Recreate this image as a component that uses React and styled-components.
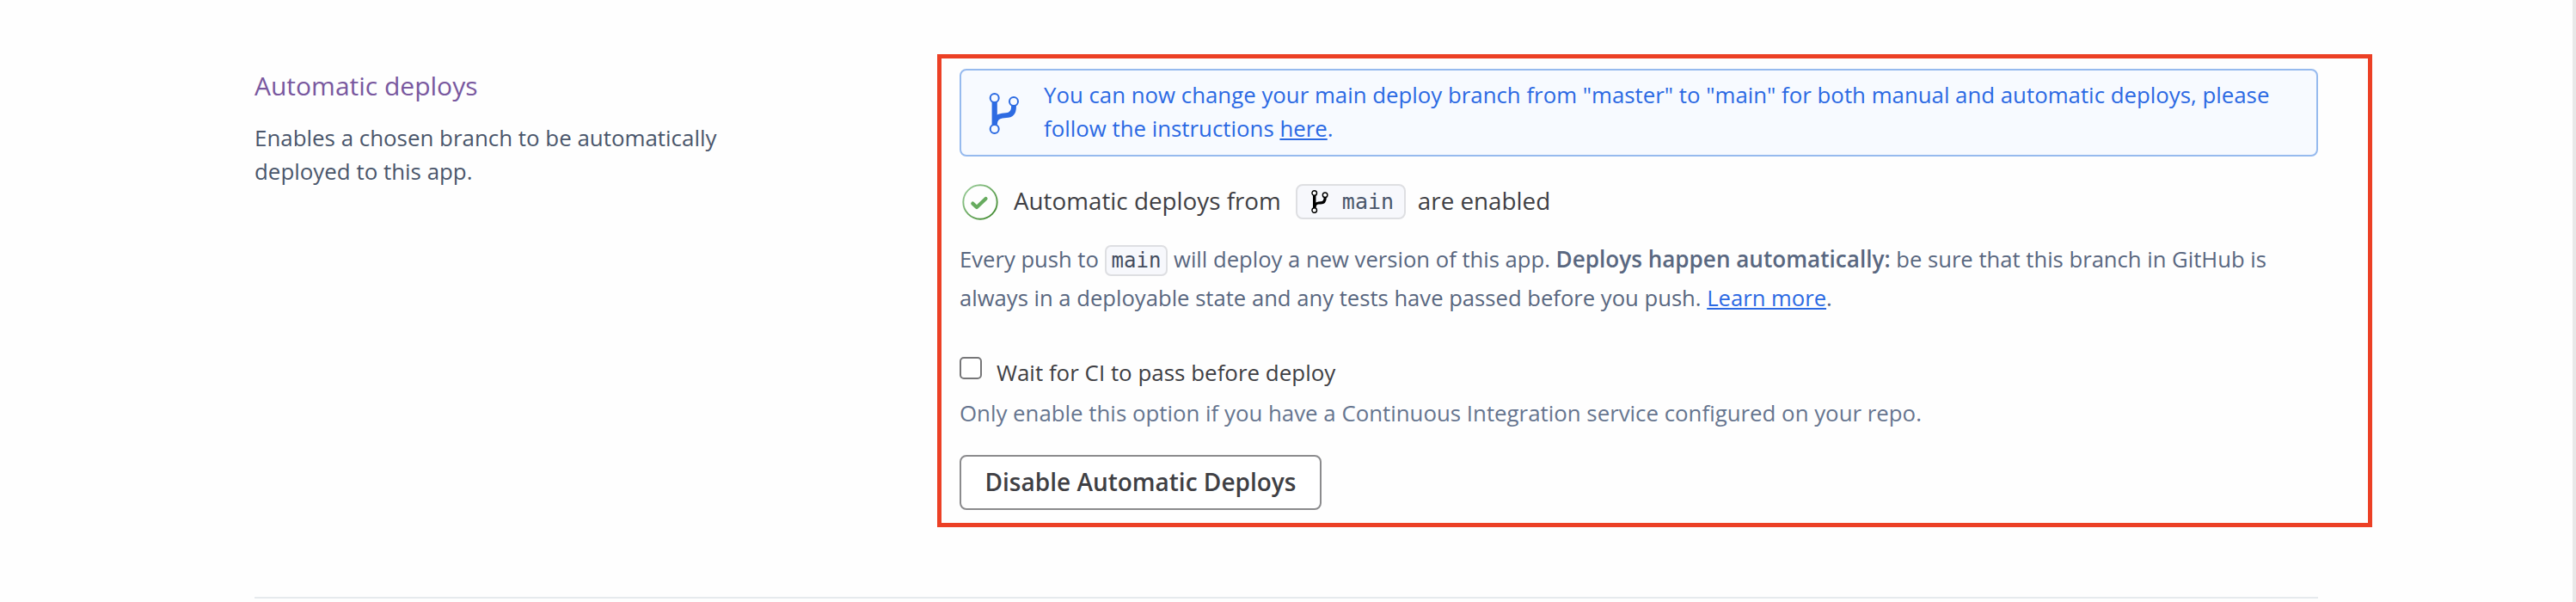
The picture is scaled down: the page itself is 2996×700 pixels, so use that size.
import React from "react";
import styled, { createGlobalStyle } from "styled-components";

const GlobalStyle = createGlobalStyle`
  *, *::before, *::after { box-sizing: border-box; }
  body {
    margin: 0;
    background: #fefefe;
    font-family: "Open Sans", "Noto Sans", sans-serif;
  }
  h2, p { margin: 0; font-weight: 400; }
`;

const Page = styled.div`
  height: 700px;
  display: flex;
  justify-content: space-between;
  overflow: hidden;
`;

const ScrollTrack = styled.div`
  width: 4px;
  background: #e8e8e8;
`;

const Section = styled.section`
  display: flex;
  align-items: flex-start;
  width: 2464px;
  height: 696px;
  margin-left: 296px;
  padding-top: 63px;
`;

const Content = styled.main`
  display: flex;
  flex-direction: column;
`;

const Columns = styled.div`
  display: flex;
  align-items: flex-start;
  height: 631px;
`;

const Divider = styled.hr`
  width: 2400px;
  height: 2px;
  margin: 0;
  border: 0;
  flex: none;
  background: #e6eaed;
`;

const Summary = styled.div`
  width: 794px;
  padding-top: 14px;
`;

const Title = styled.h2`
  font-size: 30px;
  line-height: 45px;
  color: #79589f;
`;

const Description = styled.p`
  width: 580px;
  margin-top: 19px;
  font-size: 25.9px;
  line-height: 39px;
  color: #4a566b;
`;

const Highlight = styled.div`
  display: flex;
  flex-direction: column;
  align-items: flex-start;
  width: 1669px;
  height: 550px;
  padding: 12px 58px 0 21px;
  border: 5px solid #ec4025;
`;

const Alert = styled.div`
  display: flex;
  width: 1580px;
  height: 102px;
  padding: 9px 40px 0 32px;
  border: 2px solid #96baee;
  border-radius: 8px;
  background: #f7faff;
  color: #2b69e3;
`;

const AlertIcon = styled.div`
  flex: none;
  width: 64px;
  padding-top: 15px;
`;

const AlertText = styled.p`
  font-size: 25.82px;
  line-height: 39px;
`;

const Link = styled.a`
  color: #2b69e3;
  text-decoration: underline;
  text-decoration-thickness: 2px;
  text-underline-offset: 2px;
  text-decoration-skip-ink: none;
`;

const Status = styled.div`
  display: flex;
  align-items: center;
  height: 42px;
  margin: 32px 0 0 3px;
  font-size: 27.8px;
  color: #3f3f44;
`;

const StatusLabel = styled.span`
  margin: ${(p) => (p.$last ? "-5px 0 0 14px" : "-5px 17px 0 18px")};
  line-height: 42px;
  white-space: nowrap;
`;

const BranchChip = styled.span`
  display: flex;
  align-items: center;
  gap: 16px;
  width: 128px;
  height: 41px;
  margin-top: -2px;
  padding-left: 16px;
  border: 2px solid #dedfe2;
  border-radius: 8px;
  background: #f7f8fc;
  color: #4a566b;
  font: 25px "DejaVu Sans Mono", "Liberation Mono", monospace;
`;

const Code = styled.code`
  padding: 2px 6px;
  border: 2px solid #dedfe2;
  border-radius: 7px;
  background: #f7f8fc;
  color: #434c5e;
  font: 24px "DejaVu Sans Mono", "Liberation Mono", monospace;
`;

const Details = styled.p`
  width: 1580px;
  margin-top: 23px;
  font-size: 25.64px;
  line-height: 45px;
  color: #596780;
`;

const Strong = styled.strong`
  font-size: 26.1px;
  font-weight: 600;
`;

const CheckRow = styled.label`
  display: flex;
  align-items: flex-start;
  gap: 17px;
  margin-top: 45px;
  font-size: 25.95px;
  line-height: 39px;
  color: #3f3f44;
`;

const Checkbox = styled.input`
  appearance: none;
  width: 26px;
  height: 26px;
  margin: 1px 0 0;
  border: 2px solid #767678;
  border-radius: 5px;
  background: #ffffff;
`;

const Hint = styled.p`
  margin-top: 8px;
  font-size: 25.84px;
  line-height: 39px;
  color: #66758f;
`;

const Button = styled.button`
  width: 421px;
  height: 64px;
  margin-top: 29px;
  padding: 0 0 3px;
  border: 2px solid #8b8b8d;
  border-radius: 8px;
  background: #ffffff;
  color: #3f3f44;
  font: 600 28px "Open Sans", "Noto Sans", sans-serif;
`;

const Svg = styled.svg`
  display: block;
  flex: none;
`;

function BranchIcon({ width, height, color, ring = 2, fill }) {
  return (
    <Svg width={width} height={height} viewBox="0 0 36 50" fill="none" stroke={color}>
      <path d="M6.7 12V40" strokeWidth="6.2" />
      <path d="M29 16V18.5C29 25 26 28 20 28.2L15.5 28.6C10.5 29.2 7.2 32 7 38" strokeWidth="5.8" />
      <g fill={fill} strokeWidth={ring}>
        <circle cx="6.7" cy="8" r="5" />
        <circle cx="29" cy="12" r="5" />
        <circle cx="6.7" cy="44" r="5" />
      </g>
    </Svg>
  );
}

function SuccessIcon() {
  return (
    <Svg width="42" height="42" viewBox="0 0 42 42" fill="none">
      <defs>
        <linearGradient id="ring" x1="0" y1="0" x2="1" y2="1">
          <stop offset="0" stopColor="#9fd09f" />
          <stop offset="1" stopColor="#3a8527" />
        </linearGradient>
      </defs>
      <circle cx="21" cy="21" r="19.7" stroke="url(#ring)" strokeWidth="1.9" />
      <path d="M12.3 22.6L17 27L27.5 17" stroke="#67ab5f" strokeWidth="4.2" strokeLinecap="round" strokeLinejoin="round" />
    </Svg>
  );
}

export default function App() {
  return (
    <>
      <GlobalStyle />
      <Page>
        <Section>
          <Content>
            <Columns>
              <Summary>
                <Title>Automatic deploys</Title>
                <Description>Enables a chosen branch to be automatically deployed to this app.</Description>
              </Summary>
              <Highlight>
                <Alert>
                  <AlertIcon>
                    <BranchIcon width={36} height={50} color="#2d6be2" fill="#f7faff" />
                  </AlertIcon>
                  <AlertText>
                    You can now change your main deploy branch from "master" to "main" for both manual and automatic
                    deploys, please follow the instructions <Link>here</Link>.
                  </AlertText>
                </Alert>
                <Status>
                  <SuccessIcon />
                  <StatusLabel>Automatic deploys from</StatusLabel>
                  <BranchChip>
                    <BranchIcon width={20} height={28} color="#000000" ring={2.6} fill="#ffffff" />
                    main
                  </BranchChip>
                  <StatusLabel $last>are enabled</StatusLabel>
                </Status>
                <Details>
                  Every push to <Code>main</Code> will deploy a new version of this app.{" "}
                  <Strong>Deploys happen automatically:</Strong> be sure that this branch in GitHub is always in a
                  deployable state and any tests have passed before you push. <Link>Learn more</Link>.
                </Details>
                <CheckRow>
                  <Checkbox type="checkbox" />
                  Wait for CI to pass before deploy
                </CheckRow>
                <Hint>
                  Only enable this option if you have a Continuous Integration service configured on your repo.
                </Hint>
                <Button type="button">Disable Automatic Deploys</Button>
              </Highlight>
            </Columns>
            <Divider />
          </Content>
        </Section>
        <ScrollTrack />
      </Page>
    </>
  );
}
